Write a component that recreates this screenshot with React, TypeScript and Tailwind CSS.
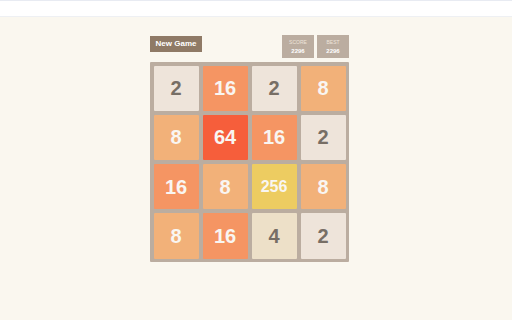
import React from "react";

const board: number[][] = [
  [2, 16, 2, 8],
  [8, 64, 16, 2],
  [16, 8, 256, 8],
  [8, 16, 4, 2],
];

function tileClass(v: number): string {
  switch (v) {
    case 2:
      return "bg-[#eee4da] text-[#776e65]";
    case 4:
      return "bg-[#ede0c8] text-[#776e65]";
    case 8:
      return "bg-[#f2b179] text-[#f9f6f2]";
    case 16:
      return "bg-[#f59563] text-[#f9f6f2]";
    case 64:
      return "bg-[#f65e3b] text-[#f9f6f2]";
    case 256:
      return "bg-[#edcc61] text-[#f9f6f2]";
    default:
      return "bg-[#cdc1b4] text-[#776e65]";
  }
}

function sizeClass(v: number): string {
  return v >= 100 ? "text-[16px]" : "text-[20px]";
}

export default function App() {
  return (
    <div
      className="w-[512px] h-[320px] flex flex-col bg-[#faf7ef]"
      style={{ fontFamily: '"Liberation Sans", Arial, sans-serif' }}
    >
      <div className="h-[17px] bg-white border-t border-[#e8ebf2] border-b border-b-[#eef0f3]" />
      <div className="flex-1 pt-[18px]">
        <div className="ml-[150px] w-[199px] flex flex-col gap-[4px]">
          <div className="flex justify-between items-start">
            <div className="mt-[1px] w-[52px] h-[16px] bg-[#8f7a66] text-white font-bold text-[8px] flex items-center justify-center">
              New Game
            </div>
            <div className="flex gap-[3px]">
              <div className="w-[32px] h-[23px] bg-[#bbada0] flex flex-col items-center justify-center leading-none gap-[3px]">
                <span className="text-[5px] text-[#eee4da]">SCORE</span>
                <span className="text-[6px] font-bold text-white">2296</span>
              </div>
              <div className="w-[32px] h-[23px] bg-[#bbada0] flex flex-col items-center justify-center leading-none gap-[3px]">
                <span className="text-[5px] text-[#eee4da]">BEST</span>
                <span className="text-[6px] font-bold text-white">2296</span>
              </div>
            </div>
          </div>
          <div className="w-[199px] h-[200px] bg-[#bbada0] p-[3.5px] grid grid-cols-4 grid-rows-4 gap-[4px] rounded-[1px]">
            {board.flat().map((v, i) => (
              <div
                key={i}
                className={`flex items-center justify-center font-bold rounded-[1px] ${tileClass(v)} ${sizeClass(v)}`}
              >
                {v}
              </div>
            ))}
          </div>
        </div>
      </div>
    </div>
  );
}
